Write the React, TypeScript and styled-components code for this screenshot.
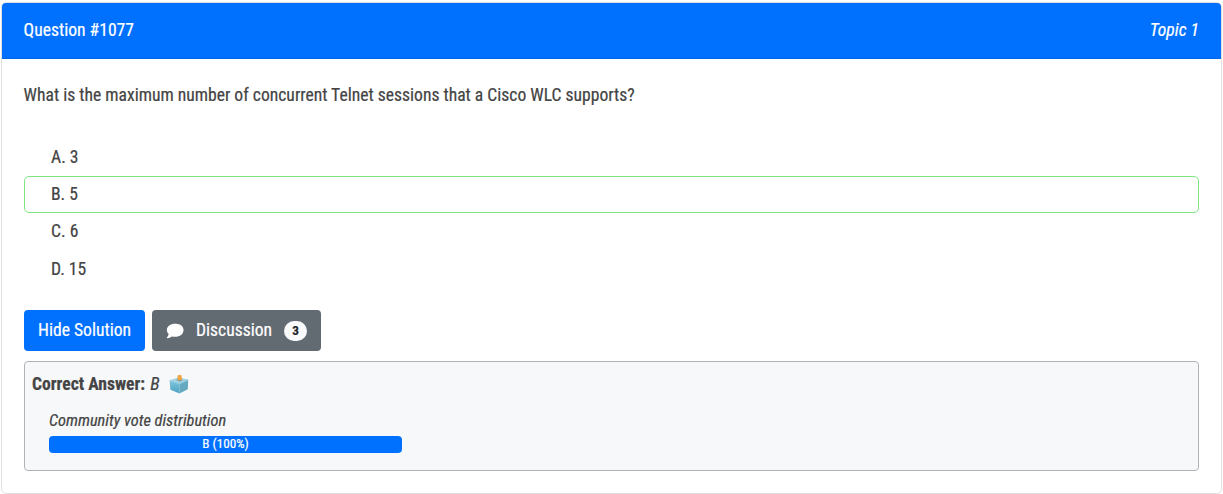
import React from "react";
import styled, { createGlobalStyle } from "styled-components";

const GlobalStyle = createGlobalStyle`
  * { box-sizing: border-box; }
  body {
    margin: 0;
    background: #fff;
    color: #444;
    font-family: "Roboto Condensed", Roboto, sans-serif;
    font-stretch: 75%;
    font-size: 17.6px;
    line-height: 25px;
    -webkit-text-stroke: 0.2px currentColor;
  }
`;

const Card = styled.article`
  margin: 2px 1px 0;
  height: 492px;
  border: 1px solid #dfdfdf;
  border-radius: 5px;
  overflow: hidden;
`;

const CardHeader = styled.header`
  display: flex;
  justify-content: space-between;
  height: 56px;
  padding: 15px 22px 0 21.6px;
  background: #0070ff;
  border-bottom: 1px solid #0066e8;
  color: #fff;
`;

const Topic = styled.span`
  font-style: italic;
`;

const CardBody = styled.div`
  padding: 24px 22px 0 22px;
`;

const QuestionText = styled.p`
  margin: 0 0 30.6px -0.4px;
`;

const Choices = styled.ul`
  list-style: none;
  margin: 0 0 21.8px;
  padding: 0;
`;

const Choice = styled.li<{ $correct?: boolean }>`
  height: 37.4px;
  padding: 5px 26px;
  border: 1px solid ${(p) => (p.$correct ? "#7fe57f" : "transparent")};
  border-radius: 5px;
`;

const Actions = styled.div`
  display: flex;
  gap: 7px;
  margin-bottom: 10px;
`;

const Button = styled.button<{ $tone: "primary" | "secondary"; $width: number }>`
  display: flex;
  align-items: center;
  width: ${(p) => p.$width}px;
  height: 41px;
  padding: 0 14px;
  border: 0;
  border-radius: 4px;
  background: ${(p) => (p.$tone === "primary" ? "#0070ff" : "#626a72")};
  color: #fff;
  font: inherit;
  white-space: nowrap;
`;

const CommentIcon = styled.svg`
  width: 18px;
  height: 16px;
  margin: 1px 12px 0 0;
`;

const Count = styled.span`
  width: 23px;
  height: 20px;
  margin: 1px 0 0 12px;
  border-radius: 10px;
  background: #f8f9fa;
  color: #212529;
  font-size: 13.2px;
  font-weight: 700;
  line-height: 20px;
  text-align: center;
`;

const Answer = styled.section`
  height: 110px;
  padding: 10px 7px;
  border: 1px solid #b2b3b5;
  border-radius: 4px;
  background: #f7f8fa;
`;

const AnswerLine = styled.div`
  display: flex;
  align-items: center;
  height: 25px;
`;

const AnswerValue = styled.em`
  margin: 0 9px 0 5px;
`;

const VoteTitle = styled.div`
  margin: 12px 0 3px 17px;
  font-size: 16.4px;
  font-style: italic;
  line-height: 24px;
`;

const VoteBar = styled.div`
  width: 353px;
  height: 17px;
  margin-left: 17px;
  border-radius: 4px;
  background: #0070ff;
  color: #fff;
  font-size: 13.2px;
  line-height: 16px;
  text-align: center;
`;

const BallotBox = () => (
  <svg width="20" height="20" viewBox="0 0 20 20" aria-hidden="true">
    <defs>
      <linearGradient id="side" x1="0" y1="0" x2="0" y2="1">
        <stop offset="0" stopColor="#83c5dc" />
        <stop offset="1" stopColor="#4ba3c0" />
      </linearGradient>
    </defs>
    <path d="M.6 6.2 L9 3.6 L19.2 5.6 L10.6 9.2Z" fill="#a5d3e1" />
    <path d="M.6 6.2 L10.6 9 V19.6 L1.4 15.8Z" fill="url(#side)" />
    <path d="M19.2 5.6 L10.6 9 V19.6 L18.8 15.2Z" fill="#65a9c0" />
    <path d="M.6 6.2 L10.6 9 L19.2 5.6 V6.6 L10.6 10.2 L.6 7.2Z" fill="#93cfe1" />
    <path d="M7 6 L10 5 L14.2 5.8 L10.8 7.4Z" fill="#5a93a5" />
    <path d="M8.4 1.4 L12.2 .8 L13.2 6 L8.8 6.6Z" fill="#f2a341" />
  </svg>
);

const choices = [
  { letter: "A", text: "3" },
  { letter: "B", text: "5", correct: true },
  { letter: "C", text: "6" },
  { letter: "D", text: "15" },
];

export default function App() {
  return (
    <>
      <GlobalStyle />
      <Card>
        <CardHeader>
          <span>Question #1077</span>
          <Topic>Topic 1</Topic>
        </CardHeader>
        <CardBody>
          <QuestionText>
            What is the maximum number of concurrent Telnet sessions that a Cisco WLC supports?
          </QuestionText>
          <Choices>
            {choices.map((c) => (
              <Choice key={c.letter} $correct={c.correct}>
                {c.letter}. {c.text}
              </Choice>
            ))}
          </Choices>
          <Actions>
            <Button $tone="primary" $width={121}>Hide Solution</Button>
            <Button $tone="secondary" $width={169}>
              <CommentIcon viewBox="0 0 18 16" aria-hidden="true">
                <path
                  d="M9.2 .8C4.5 .8 .8 3.5 .8 6.9c0 1.500.7 2.900 1.900 4C2.300 12.800 .9 14.400.8 14.500c-.2.300 0 .7.300.7 2.100 0 3.800-1 4.700-1.800 1 .300 2.200.400 3.400.400 4.700 0 8.400-2.900 8.400-6.900S13.900 .8 9.200 .8Z"
                  fill="#fff"
                />
              </CommentIcon>
              Discussion
              <Count>3</Count>
            </Button>
          </Actions>
          <Answer>
            <AnswerLine>
              <strong>Correct Answer:</strong>
              <AnswerValue>B</AnswerValue>
              <BallotBox />
            </AnswerLine>
            <VoteTitle>Community vote distribution</VoteTitle>
            <VoteBar>B (100%)</VoteBar>
          </Answer>
        </CardBody>
      </Card>
    </>
  );
}
